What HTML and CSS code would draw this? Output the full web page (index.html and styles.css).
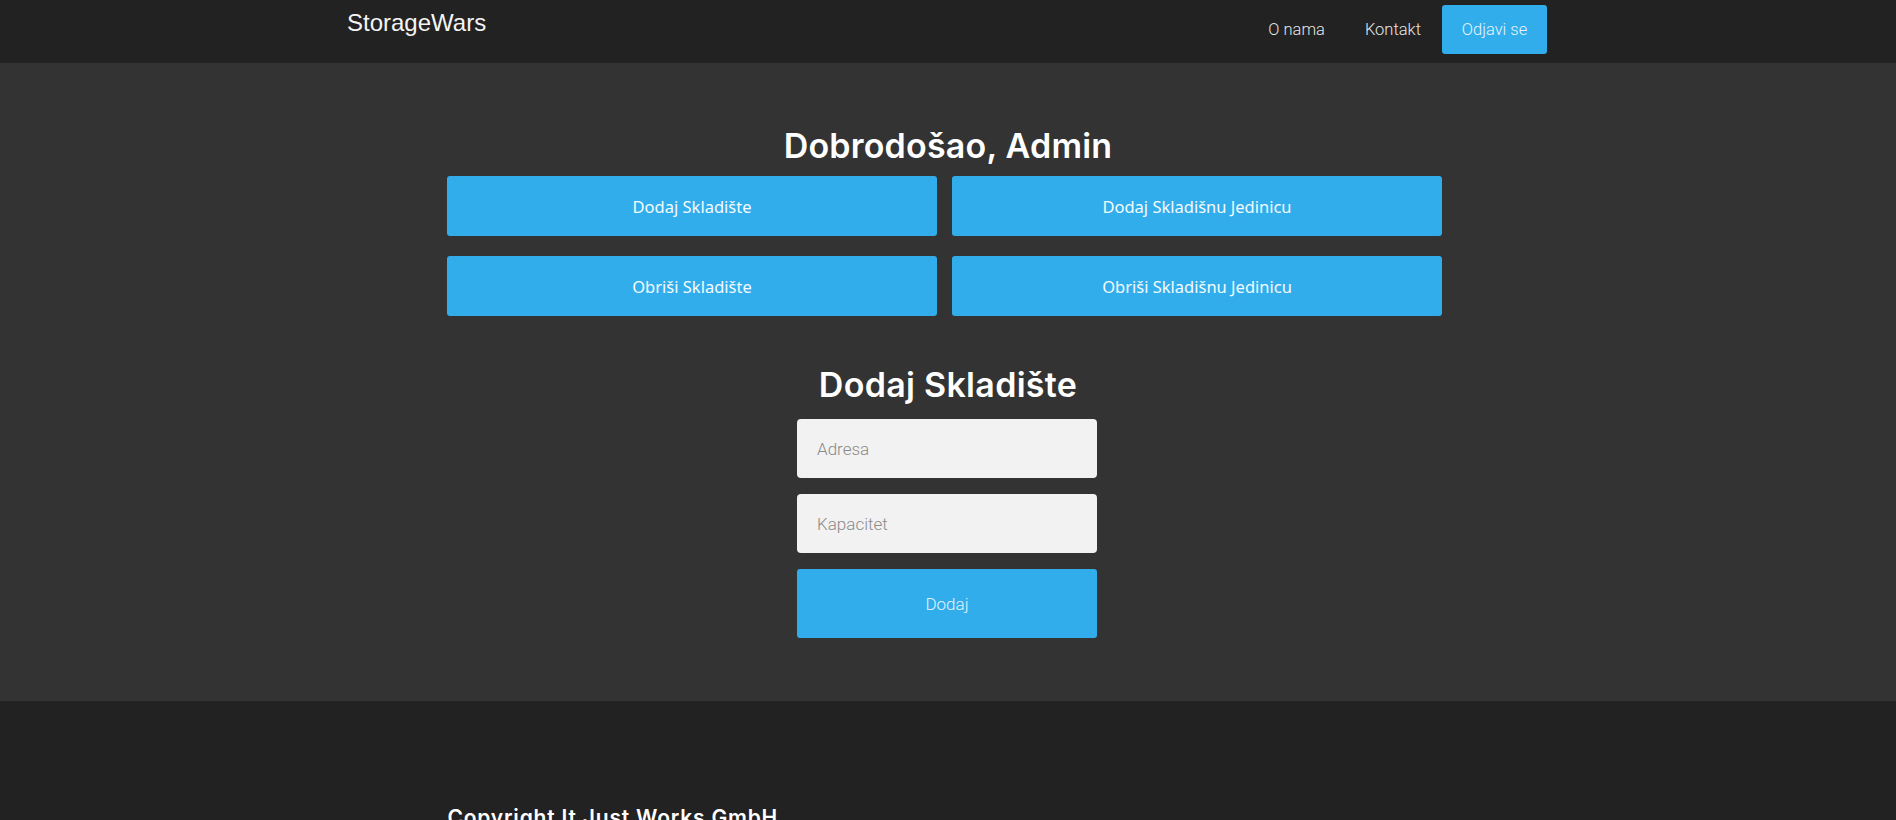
FILE: index.html
```html
<!DOCTYPE html>
<html lang="hr">
<head>
<meta charset="utf-8">
<title>StorageWars</title>
<link rel="stylesheet" href="styles.css">
</head>
<body>
<nav class="navbar">
  <div class="nav-inner">
    <a class="brand" href="#">StorageWars</a>
    <ul class="nav-links">
      <li><a href="#">O nama</a></li>
      <li><a href="#">Kontakt</a></li>
      <li><a class="logout" href="#">Odjavi se</a></li>
    </ul>
  </div>
</nav>
<main class="main">
  <h1 class="welcome">Dobrodošao, Admin</h1>
  <div class="actions">
    <button class="action">Dodaj Skladište</button>
    <button class="action">Dodaj Skladišnu Jedinicu</button>
    <button class="action">Obriši Skladište</button>
    <button class="action">Obriši Skladišnu Jedinicu</button>
  </div>
  <h2 class="form-title">Dodaj Skladište</h2>
  <form class="form">
    <input class="field" type="text" placeholder="Adresa">
    <input class="field" type="text" placeholder="Kapacitet">
    <button class="submit" type="button">Dodaj</button>
  </form>
</main>
<footer class="footer">
  <div class="footer-inner">
    <p class="copyright">Copyright It Just Works GmbH</p>
  </div>
</footer>
</body>
</html>
```
FILE: styles.css
```css
* { box-sizing: border-box; }
html, body { margin: 0; padding: 0; }
body {
  background: #222222;
  font-family: Roboto, "Liberation Sans", sans-serif;
  color: #fff;
}
.navbar {
  background: #222222;
  height: 63px;
}
.nav-inner {
  width: 1200px;
  margin: 0 auto;
  display: flex;
  justify-content: space-between;
  align-items: flex-start;
}
.brand {
  font-family: "Liberation Sans", Arial, sans-serif;
  font-size: 24px;
  color: #f4f4f4;
  text-decoration: none;
  margin-top: 9px;
  margin-left: -1px;
}
.nav-links {
  list-style: none;
  margin: 5px 0 0;
  padding: 0;
  display: flex;
}
.nav-links a {
  display: block;
  font-weight: 300;
  font-size: 16.5px;
  color: #e6e6e6;
  text-decoration: none;
  line-height: 49px;
  padding: 0 20px;
}
.nav-links .logout {
  background: #31adeb;
  border-radius: 3px;
  color: #e8f4fb;
  width: 105px;
  padding: 0;
  text-align: center;
  margin-left: 1px;
  margin-right: 1px;
}
.main {
  background: #333333;
  height: 638px;
  display: flex;
  flex-direction: column;
  align-items: center;
  padding-top: 64px;
}
.welcome, .form-title {
  font-family: Inter, "Noto Sans", sans-serif;
  font-weight: 600;
  margin: 0;
  color: #fff;
  line-height: 1;
}
.welcome {
  font-size: 34px;
  letter-spacing: 0.2px;
  margin-top: 2px;
  height: 44px;
}
.actions {
  display: grid;
  grid-template-columns: 490px 490px;
  column-gap: 15px;
  row-gap: 20px;
  margin-top: 3px;
  margin-right: 7px;
}
.action {
  height: 60px;
  background: #31adeb;
  border: none;
  border-radius: 3px;
  color: #f4fbff;
  font-family: "Noto Sans", sans-serif;
  font-size: 16.5px;
  font-weight: 400;
}
.form-title {
  font-size: 34px;
  letter-spacing: 0.3px;
  margin-top: 52px;
  height: 51px;
}
.form {
  width: 300px;
  display: flex;
  flex-direction: column;
  gap: 16px;
  margin-right: 2px;
}
.field {
  height: 59px;
  border: none;
  border-radius: 4px;
  background: #f2f2f2;
  padding: 0 20px;
  font-family: Roboto, sans-serif;
  font-weight: 300;
  font-size: 17px;
  color: #333;
}
.field::placeholder { color: #8a8a8a; }
.submit {
  height: 69px;
  border: none;
  border-radius: 3px;
  background: #31adeb;
  color: #e4f3fc;
  font-family: Roboto, sans-serif;
  font-weight: 300;
  font-size: 17px;
}
.footer {
  background: #222222;
  height: 200px;
}
.footer-inner {
  width: 995px;
  margin: 0 auto;
  padding-top: 104px;
  position: relative;
  left: -3px;
}
.copyright {
  margin: 0;
  font-family: Inter, "Noto Sans", sans-serif;
  font-weight: 600;
  font-size: 21px;
  letter-spacing: 0.8px;
  color: #fff;
}
```
